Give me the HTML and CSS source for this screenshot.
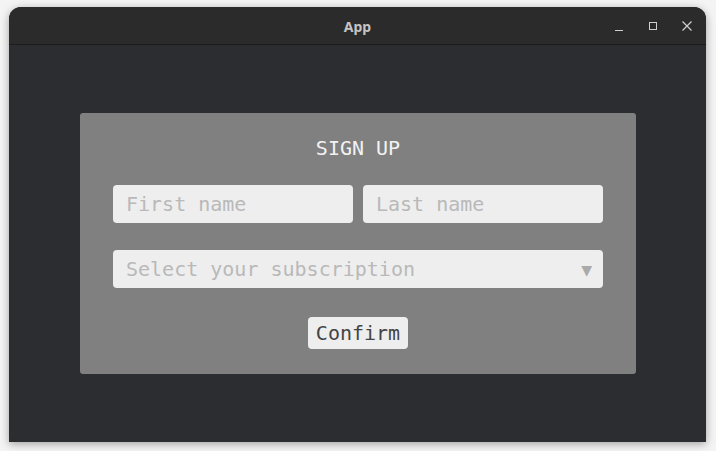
FILE: index.html
```html
<!DOCTYPE html>
<html>
<head>
<meta charset="utf-8">
<link rel="stylesheet" href="styles.css">
</head>
<body>
<div class="window">
  <div class="titlebar">
    <div class="title">App</div>
    <div class="controls">
      <svg class="ctl" width="12" height="12" viewBox="0 0 12 12"><path d="M2 10.5h8" stroke="#cfcfcf" stroke-width="1"/></svg>
      <svg class="ctl" width="12" height="12" viewBox="0 0 12 12"><rect x="2.5" y="2.5" width="7" height="7" fill="none" stroke="#cfcfcf" stroke-width="1"/></svg>
      <svg class="ctl" width="12" height="12" viewBox="0 0 12 12"><path d="M1.5 1.5l9 9M10.5 1.5l-9 9" stroke="#cfcfcf" stroke-width="1.2"/></svg>
    </div>
  </div>
  <div class="content">
    <div class="card">
      <div class="heading">SIGN UP</div>
      <div class="row">
        <div class="field"><span class="placeholder">First name</span></div>
        <div class="field"><span class="placeholder">Last name</span></div>
      </div>
      <div class="field select">
        <span class="placeholder">Select your subscription</span>
        <span class="arrow">▼</span>
      </div>
      <div class="actions">
        <button class="btn">Confirm</button>
      </div>
    </div>
  </div>
</div>
</body>
</html>
```
FILE: styles.css
```css
html, body {
  margin: 0;
  padding: 0;
  background: #f4f4f4;
}
body {
  padding: 7px 10px 9px 9px;
  height: 451px;
  box-sizing: border-box;
}
.window {
  width: 697px;
  height: 435px;
  border-radius: 12px 12px 0 0;
  background: #2c2d31;
  box-shadow: 0 2px 8px rgba(0,0,0,0.35);
  display: flex;
  flex-direction: column;
  overflow: hidden;
}
.titlebar {
  height: 37px;
  flex: none;
  background: #2b2b2b;
  border-bottom: 1px solid #1c1c1c;
  display: flex;
  align-items: center;
  justify-content: center;
  position: relative;
}
.title {
  font-family: "Noto Sans", sans-serif;
  font-weight: bold;
  font-size: 14px;
  color: #c4c4c4;
  margin-top: 2px;
}
.controls {
  position: absolute;
  right: 13px;
  top: 13px;
  display: flex;
  gap: 22px;
}
.ctl { display: block; }
.content {
  flex: 1;
  display: flex;
  align-items: center;
  justify-content: center;
  padding-left: 1px;
}
.card {
  width: 556px;
  height: 261px;
  box-sizing: border-box;
  background: #808080;
  border-radius: 3px;
  padding: 22px 33px 0 33px;
  font-family: "DejaVu Sans Mono", monospace;
}
.heading {
  text-align: center;
  color: #f2f2f2;
  font-size: 20px;
  line-height: 26px;
  margin-bottom: 24px;
}
.row {
  display: flex;
  gap: 10px;
  margin-bottom: 27px;
}
.field {
  flex: 1;
  height: 38px;
  background: #eeeeee;
  border-radius: 4px;
  display: flex;
  align-items: center;
  padding: 0 13px;
  font-size: 20px;
  box-sizing: border-box;
}
.placeholder {
  color: #b9b9b9;
}
.select {
  justify-content: space-between;
  padding-right: 11px;
}
.arrow {
  color: #aaaaaa;
  font-size: 18px;
}
.actions {
  display: flex;
  justify-content: center;
  margin-top: 29px;
}
.btn {
  width: 100px;
  height: 32px;
  border: none;
  border-radius: 4px;
  background: #eeeeee;
  color: #444444;
  font-family: "DejaVu Sans Mono", monospace;
  font-size: 20px;
  padding: 0;
}
```
